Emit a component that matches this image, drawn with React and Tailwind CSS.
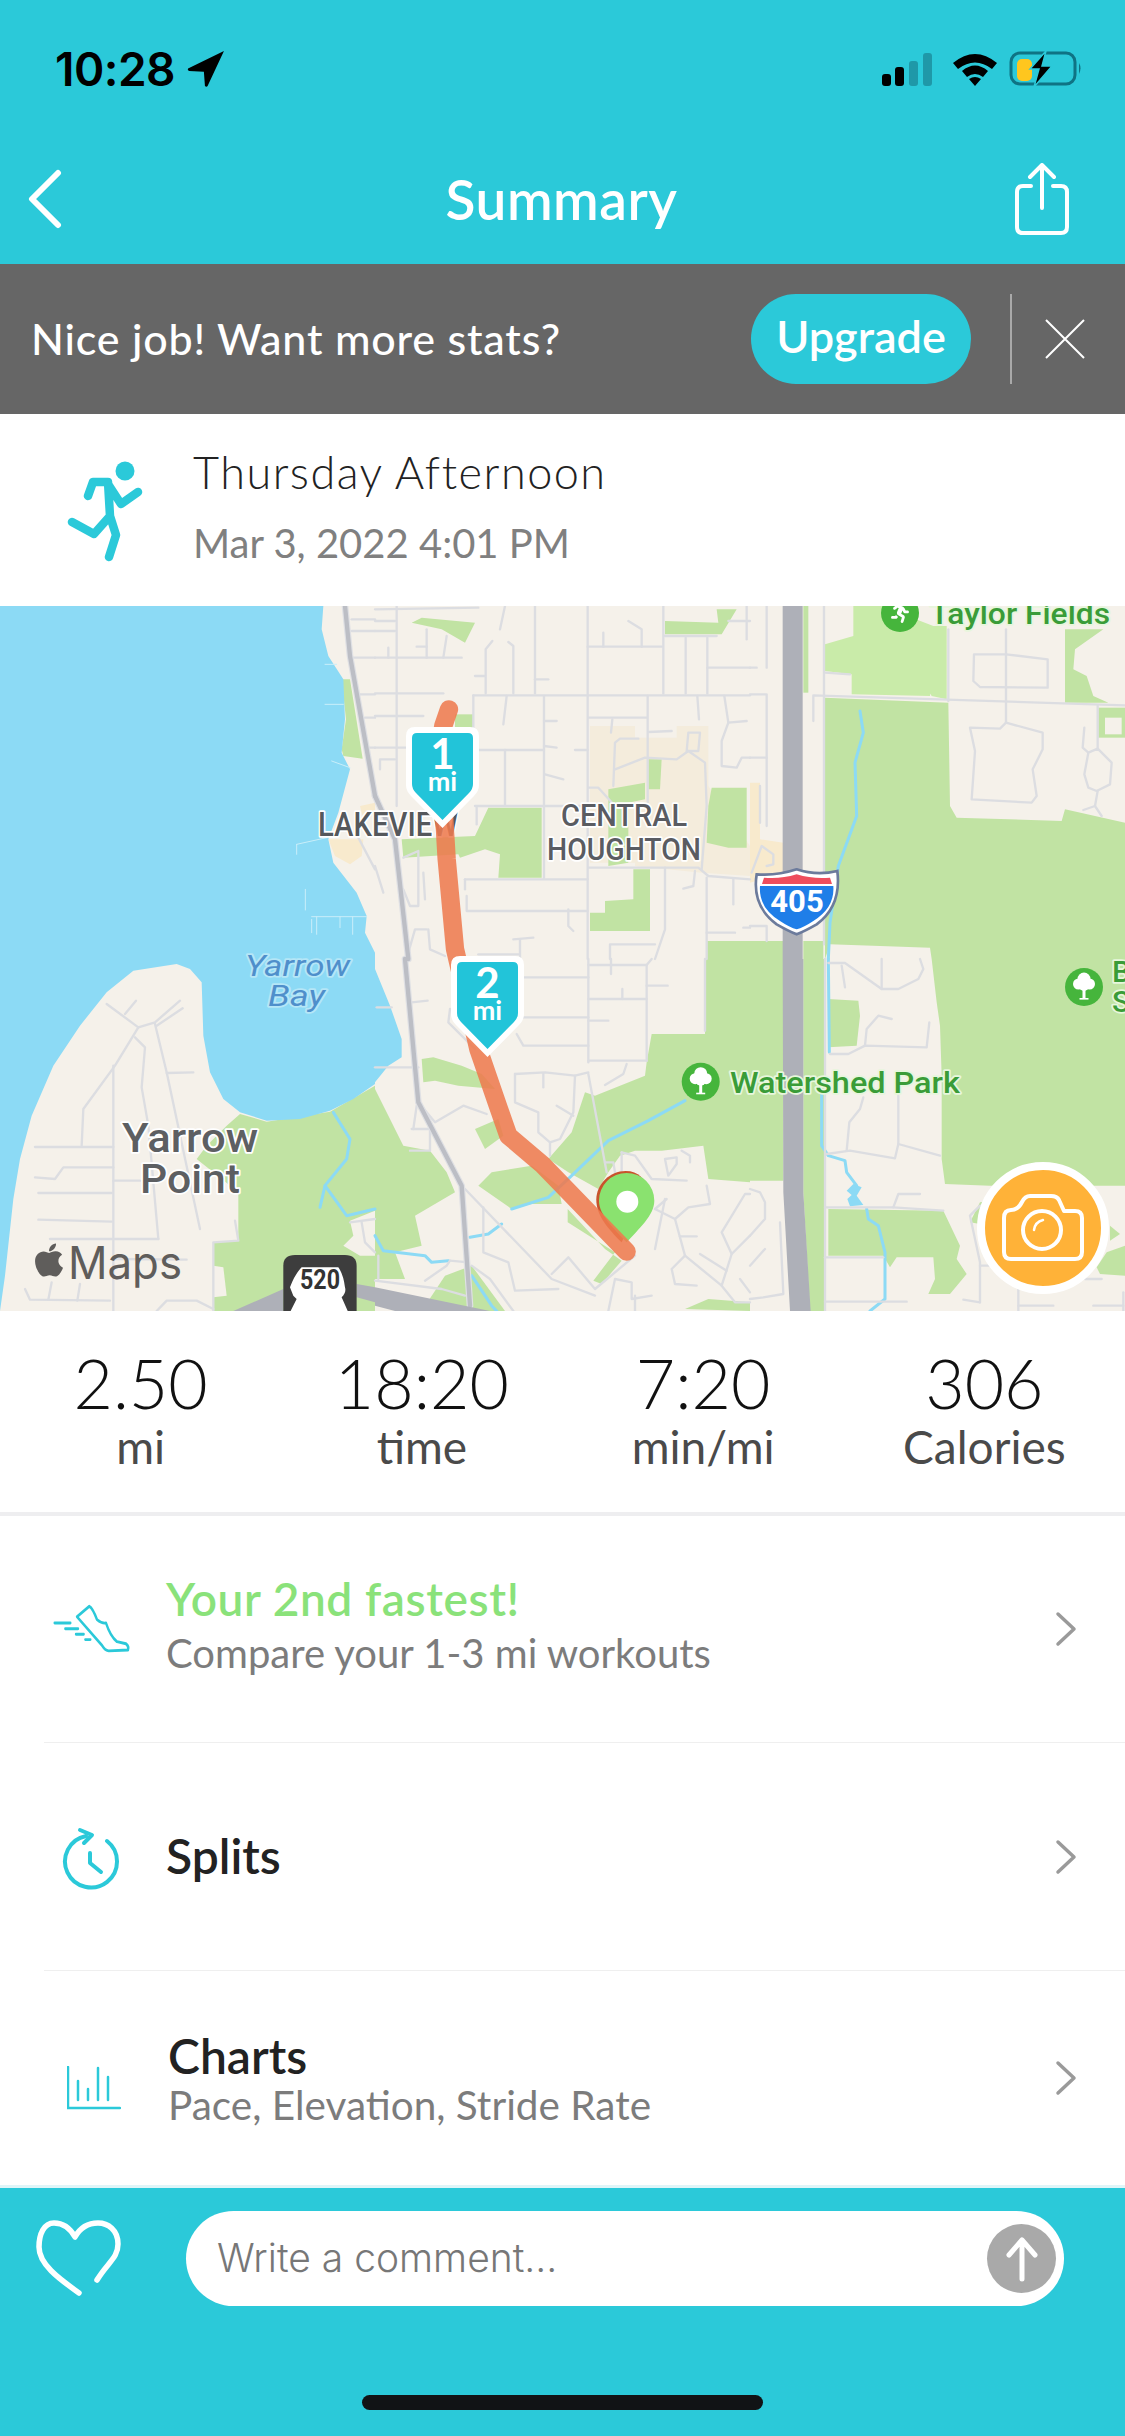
import React from "react";
import { FaApple, FaRunning } from "react-icons/fa";

const crops = [
  { // A
    x: 0, y: 606,
    water: [[[0,0],[970,0],[965,70],[985,150],[1030,220],[1035,340],[1025,440],[1050,490],[1015,620],[985,700],[1000,770],[1070,860],[1100,930],[1095,980],[1125,1040],[1125,1059],[0,1059]]],
    green: [[[1025,220],[1050,220],[1088,458],[1030,450],[1025,430],[1038,340]]],
    tan: [[[985,700],[1090,700],[1085,750],[1050,775],[1005,750]],[[1080,600],[1125,590],[1125,620],[1090,640]]],
    roads: [[[1060,155],[1125,155]],[[1055,40],[1125,40]],[[1055,75],[1125,75]],[[1080,265],[1125,265]],[[1095,335],[1125,335]],[[1105,425],[1125,425]],[[1075,695],[1125,790]]],
    docks: [[[975,295],[1030,295]],[[890,715],[980,695]],[[890,715],[890,745]],[[916,850],[916,912]],[[935,932],[1100,932]],[[950,932],[950,985]],[[935,940],[935,980]],[[1020,932],[1020,965]],[[1058,932],[1058,985]],[[975,175],[1010,175]],[[995,465],[1050,485]]],
    thick: [[[1035,0],[1050,150],[1125,570]]],
  },
  { // B
    x: 0, y: 959,
    water: [[[0,0],[1125,0],[1125,375],[1060,420],[990,455],[900,480],[800,485],[720,460],[670,420],[630,340],[610,230],[605,70],[570,30],[530,15],[400,35],[320,100],[240,200],[160,320],[95,470],[60,600],[40,720],[15,950],[0,1056]]],
    green: [[[720,465],[800,488],[990,458],[1125,380],[1125,1056],[640,1056],[640,850],[715,845],[715,700],[590,600],[620,560],[680,500]]],
    land: [[[1050,785],[1125,755],[1125,890],[1080,890],[1030,860],[1060,830]],[[640,920],[670,925],[680,1010],[640,1015]]],
    river: [[[1000,460],[1050,540],[1040,600],[975,680],[1040,770],[1125,750]],[[975,680],[960,745]]],
    roads: [[[320,135],[415,205],[465,190],[540,125]],[[375,165],[408,125]],[[470,200],[548,148]],[[415,205],[345,320],[250,450],[245,560]],[[405,235],[435,265],[425,385],[445,500],[475,840]],[[465,195],[500,340],[600,810]],[[500,342],[580,340]],[[340,320],[340,1056]],[[105,564],[340,564]],[[105,655],[165,660],[190,625],[340,625]],[[115,702],[335,702]],[[115,782],[335,788]],[[340,665],[420,665]],[[150,840],[475,840]],[[340,900],[560,902]],[[75,990],[90,1022],[330,1025]],[[155,970],[145,1022]],[[240,975],[232,1025]],[[470,1056],[500,1025],[590,1025],[640,1050]],[[705,785],[715,845],[640,850],[640,1056]],[[1050,790],[1125,780]],[[1085,790],[1095,850],[1125,880]]],
    gray: [[[700,1056],[850,990],[850,1056]],[[1070,975],[1125,985],[1125,1030],[1070,1015]]],
  },
  { // C
    x: 375, y: 959,
    water: [[[0,30],[45,140],[80,240],[80,295],[40,320],[0,370]]],
    green: [[[0,390],[85,560],[165,575],[215,640],[240,700],[120,770],[140,860],[60,880],[90,960],[0,960]],[[140,300],[175,295],[260,320],[320,345],[360,390],[250,380],[180,365],[145,370]],[[300,510],[370,480],[385,530],[330,570]],[[310,680],[350,640],[470,620],[550,680],[560,735],[470,735],[410,750]],[[990,0],[1125,0],[1125,670],[1000,660],[985,560],[860,575],[780,575],[735,590],[700,640],[670,690],[580,640],[520,600],[590,520],[630,400],[660,410],[810,350],[815,310],[830,225],[990,225]],[[578,750],[578,790],[720,880],[655,965],[680,975],[740,905],[690,870]],[[290,920],[390,1056],[140,1056],[210,950]],[[930,1050],[1000,1020],[1125,1030],[1125,1056]]],
    river: [[[930,425],[820,485],[700,545],[590,650],[520,715],[410,750]],[[380,795],[340,825],[285,835]],[[0,830],[25,875],[150,890],[170,910],[220,905]],[[290,950],[350,1040],[365,1056]]],
    roads: [[[640,0],[640,310]],[[640,18],[815,18],[830,0]],[[708,0],[708,45]],[[815,18],[815,305]],[[815,80],[878,80]],[[640,120],[815,120]],[[742,90],[742,120]],[[640,185],[700,185]],[[440,55],[640,55]],[[440,175],[640,175]],[[425,225],[445,260],[640,260]],[[640,305],[815,305]],[[755,315],[745,345],[690,378]],[[990,0],[990,215]],[[420,345],[510,340],[600,350],[640,340]],[[505,345],[505,385]],[[420,345],[420,430],[490,460],[490,520],[525,550],[525,590]],[[600,350],[595,460],[555,540],[525,550]],[[545,440],[595,470]],[[640,345],[695,640]],[[225,150],[220,190],[300,270]],[[110,130],[158,125]],[[130,430],[180,490],[265,440],[335,465]],[[115,510],[125,440]],[[110,510],[165,510],[165,575],[105,575]],[[270,690],[530,960],[660,1010]],[[325,745],[325,880],[400,910],[420,995],[550,990]],[[530,945],[580,895],[660,990],[780,890]],[[700,1056],[720,960],[770,970],[770,1020],[830,1010]],[[290,920],[345,960],[415,1056]],[[0,965],[200,990],[270,1010]],[[225,905],[280,910]],[[10,890],[10,960]],[[150,965],[215,920],[225,905]],[[740,580],[740,640]],[[740,580],[780,590],[830,660],[935,665]],[[870,600],[880,650],[905,615],[905,595],[870,600]],[[920,575],[945,590],[945,610]],[[690,610],[715,610],[720,640]],[[840,750],[900,780],[930,890],[1040,980],[1070,885],[1040,820],[1110,705],[1125,705]],[[870,720],[840,870]],[[840,750],[875,720]],[[900,780],[940,745],[1005,735],[995,680]],[[915,832],[965,832]],[[930,890],[890,930],[900,975],[965,980]],[[975,885],[1055,935]],[[1070,885],[1125,830]],[[1040,980],[1080,1030],[1125,1030]],[[1095,960],[1125,1000]],[[780,1010],[780,1056]],[[0,325],[130,325]],[[5,145],[50,145]]],
    thick: [[[90,0],[130,430],[260,680],[285,1040]]],
    gray: [[[0,985],[345,1056],[60,1056],[0,1040]]],
  },
  { // D
    x: 750, y: 606,
    green: [[[225,275],[595,290],[600,600],[620,635],[935,645],[945,610],[1125,650],[1125,1059],[545,1059],[540,1025],[240,1015],[225,1059]],[[0,1005],[100,1005],[100,1059],[0,1059]],[[160,1005],[220,1005],[220,1059],[160,1059]],[[160,0],[175,0],[175,260],[160,260]],[[945,70],[1060,70],[975,130],[970,190],[1010,210],[1030,270],[1075,290],[945,290]],[[1045,305],[1125,305],[1125,395],[1045,395]]],
    lgreen: [[[310,0],[395,0],[550,60],[590,60],[590,280],[545,270],[515,220],[545,220],[540,270],[305,265],[305,205],[225,195],[225,115],[310,90]]],
    land: [[[1065,335],[1115,335],[1115,385],[1065,385]]],
    tan: [[[0,530],[30,530],[30,700],[100,710],[100,800],[0,830]],[[345,710],[375,720],[360,795],[305,800],[330,760]]],
    river: [[[330,315],[340,380],[315,470],[320,630],[265,780],[240,950],[235,1059]]],
    roads: [[[222,0],[222,1015]],[[50,0],[50,185]],[[0,185],[20,185]],[[0,265],[50,265],[50,660]],[[0,455],[50,455]],[[30,540],[30,650]],[[190,345],[190,268],[1125,298]],[[225,200],[300,205]],[[595,70],[595,285]],[[768,70],[768,350]],[[672,145],[768,145],[893,160],[893,245],[690,243],[670,225],[672,145]],[[1043,300],[1043,430]],[[768,350],[750,368],[660,365],[675,435],[665,580],[845,590],[860,570],[848,490],[878,430],[878,380],[768,350]],[[1003,365],[998,425],[1015,440]],[[1043,428],[1085,470],[1080,535],[1040,555],[1015,545],[1003,505],[1015,440],[1043,428]],[[1043,555],[1035,600],[1000,612]],[[1035,600],[1055,630]],[[5,800],[35,720],[70,745],[70,775],[50,780]],[[0,960],[50,960],[50,1005]]],
    gray: [[[98,0],[158,0],[158,1059],[98,1059]]],
  },
  { // E
    x: 750, y: 959,
    green: [[[0,0],[100,0],[100,665],[0,665]],[[160,0],[222,0],[225,1056],[180,1056],[160,700]],[[545,0],[1125,0],[1125,680],[720,680],[585,675],[575,600],[575,350],[570,200],[560,130]],[[235,120],[325,125],[330,170],[320,260],[235,265]],[[235,750],[580,755],[630,860],[620,900],[650,945],[600,1005],[535,1005],[555,960],[550,895],[440,895],[420,925],[400,890],[235,890]],[[1080,800],[1110,825],[1080,845]],[[1040,925],[1070,880],[1125,860],[1125,950],[1050,945]],[[660,790],[690,730],[720,725],[720,800]]],
    river: [[[235,0],[238,280]],[[215,400],[215,560],[235,590],[285,605],[290,640],[320,680]],[[350,750],[355,780],[385,800],[405,880],[405,1020],[360,1056]]],
    blue: [[[290,695],[310,675],[335,685],[320,710],[340,738],[300,742],[292,720],[305,708]]],
    roads: [[[225,0],[225,1056]],[[235,12],[285,12],[395,90],[445,90],[505,60],[520,30],[510,0]],[[275,20],[285,85]],[[395,0],[395,90]],[[240,285],[295,285],[345,260],[530,265],[538,190]],[[345,260],[350,210],[385,170],[425,180]],[[230,585],[300,575],[435,598],[445,555],[570,590]],[[290,575],[298,490],[330,450],[340,415]],[[445,555],[445,410]],[[225,745],[430,745],[445,705],[510,705]],[[430,745],[580,755]],[[225,1028],[470,1028]],[[225,895],[400,895]],[[0,690],[30,700],[45,730],[45,780],[0,830]],[[90,790],[100,1005],[40,1015],[0,1020]],[[0,920],[45,870]],[[690,1030],[640,1022]],[[690,740],[660,770],[690,910],[690,1030]],[[690,920],[720,920]],[[805,990],[805,1056]],[[805,1040],[910,1040]],[[1030,1040],[1120,1040]],[[1005,960],[1055,960]],[[1120,1000],[1120,1056]]],
    gray: [[[98,0],[160,0],[160,700],[182,1056],[120,1056],[100,700]]],
  },
  { // F
    x: 375, y: 606,
    green: [[[110,50],[140,35],[300,50],[270,110],[200,70]],[[870,45],[1030,50],[1025,10],[1085,10],[1040,85],[870,85]],[[240,325],[295,325],[295,370],[240,370]],[[80,700],[300,690],[340,605],[500,605],[500,815],[370,815],[375,745],[330,730],[255,755],[250,745],[85,755]],[[820,460],[860,460],[855,550],[820,550]],[[700,550],[810,530],[810,580],[760,590],[760,770],[700,780]],[[1010,545],[1115,545],[1115,725],[1060,725],[995,710],[1000,600]],[[775,790],[825,790],[825,975],[645,975],[645,920],[690,920],[690,885],[775,880]],[[995,1005],[1125,1005],[1125,1059],[995,1059]]],
    tan0: [[[645,360],[780,360],[780,395],[905,395],[905,360],[1000,360],[1000,540],[1125,720],[1125,810],[980,800],[780,780],[780,770],[645,770]]],
    roads: [[[0,10],[310,5]],[[65,0],[65,600]],[[0,45],[60,45]],[[0,75],[60,75]],[[0,155],[260,155]],[[40,125],[40,155]],[[155,70],[155,155]],[[215,90],[205,155]],[[125,122],[155,122]],[[375,70],[390,0]],[[0,262],[205,262]],[[0,330],[145,330]],[[0,425],[100,425]],[[295,268],[1125,268]],[[332,262],[332,130],[352,105]],[[415,262],[415,120],[400,108]],[[480,0],[480,262]],[[480,220],[520,220]],[[330,210],[300,210]],[[638,0],[638,1059]],[[638,122],[860,122]],[[800,122],[800,70],[760,45]],[[685,80],[685,122]],[[865,0],[865,262]],[[932,95],[932,262]],[[870,90],[1025,90]],[[997,95],[997,262]],[[997,185],[1125,185]],[[1115,0],[1115,100]],[[1060,45],[1125,45]],[[295,268],[295,430]],[[395,270],[385,355]],[[507,270],[507,815]],[[507,345],[545,345]],[[507,420],[545,425]],[[510,505],[565,520]],[[310,432],[507,432]],[[390,432],[390,600]],[[300,600],[640,600]],[[600,432],[638,432]],[[640,335],[815,335]],[[712,340],[708,380]],[[818,270],[818,600]],[[820,378],[890,375]],[[715,540],[720,410],[735,398],[790,398]],[[720,490],[810,455],[905,460],[940,435],[990,470],[995,600],[980,790]],[[935,435],[940,380],[975,380],[970,435],[935,435]],[[967,270],[972,340]],[[1048,270],[1060,350],[1040,405],[1040,480],[1085,485],[1100,455],[1125,455]],[[1060,350],[1115,345]],[[640,545],[670,545],[720,600]],[[640,785],[970,785],[1000,810],[1125,820]],[[870,785],[870,970],[840,1059]],[[960,795],[955,840],[925,848]],[[995,815],[995,1059]],[[1075,820],[1075,895]],[[995,980],[1080,980]],[[1105,965],[1125,965]],[[270,820],[638,820]],[[270,820],[270,850]],[[275,870],[275,915],[638,915]],[[580,910],[580,960],[595,975]],[[705,1059],[705,1015],[840,1015]],[[415,1000],[475,995]],[[435,1000],[435,1059]],[[310,1045],[430,1045]],[[85,850],[105,900],[130,900],[130,735],[85,755]],[[155,970],[120,970],[100,1040]],[[160,970],[165,1030],[210,1050]],[[0,780],[25,860]],[[15,490],[15,460],[60,460]],[[145,800],[150,880]],[[250,600],[240,660]],[[305,605],[305,655]]],
    thick: [[[0,570],[60,700],[100,1059]]],
  },
];

const pts = (l) => l.map((p) => p.join(",")).join(" ");

const Layer = ({ k, fill, stroke, width }) =>
  crops.map((c, i) =>
    c[k] ? (
      <g key={k + i} transform={`translate(${c.x} ${c.y}) scale(${1 / 3})`}>
        {c[k].map((l, j) =>
          stroke ? (
            <polyline key={j} points={pts(l)} fill="none" stroke={stroke} strokeWidth={width} strokeLinejoin="round" strokeLinecap="round" />
          ) : (
            <polygon key={j} points={pts(l)} fill={fill} />
          )
        )}
      </g>
    ) : null
  );

const MapLabel = ({ x, y, w, size, fill, halo = "#ffffff", weight = 500, italic, anchor, children }) => (
  <text
    x={x}
    y={y}
    fontFamily="Roboto, sans-serif"
    fontSize={size}
    fontWeight={weight}
    fontStyle={italic ? "italic" : "normal"}
    fill={fill}
    stroke={halo}
    strokeWidth="3.5"
    strokeLinejoin="round"
    paintOrder="stroke"
    textAnchor={anchor}
    textLength={w}
    lengthAdjust={w ? "spacingAndGlyphs" : undefined}
  >
    {children}
  </text>
);

const Marker = ({ x, y, n }) => (
  <g transform={`translate(${x} ${y})`}>
    <path d="M9 0H64Q73 0 73 9V58Q73 64 68 69L36.5 101L5 69Q0 64 0 58V9Q0 0 9 0Z" fill="#ffffff" />
    <path d="M11 6H62Q67 6 67 11V57Q67 62 63 66L36.5 93L10 66Q6 62 6 57V11Q6 6 11 6Z" fill="#22c4d9" />
    <text x="36.5" y="42" textAnchor="middle" fontFamily="Lato, sans-serif" fontSize="42" fontWeight="700" fill="#ffffff">{n}</text>
    <text x="36.5" y="63.5" textAnchor="middle" fontFamily="Lato, sans-serif" fontSize="27" fontWeight="700" fill="#ffffff">mi</text>
  </g>
);

const Tree = ({ x, y }) => (
  <g transform={`translate(${x} ${y})`}>
    <circle r="19" fill="#46b53c" />
    <g fill="#ffffff">
      <circle cx="-5.5" cy="-3" r="5.5" />
      <circle cx="5.5" cy="-3" r="5.5" />
      <circle cx="0" cy="-8" r="6.5" />
      <circle cx="0" cy="-1" r="5" />
      <rect x="-1.5" y="0" width="3" height="12" />
      <rect x="-4.5" y="11" width="9" height="1.6" />
    </g>
  </g>
);

const MapView = () => (
  <svg viewBox="0 606 1125 705" className="block w-full h-full">
    <rect x="0" y="606" width="1125" height="705" fill="#f5f1ea" />
    <Layer k="tan0" fill="#f4ecdc" />
    <Layer k="tan" fill="#f8eacd" />
    <Layer k="green" fill="#c1e3a3" />
    <Layer k="lgreen" fill="#c9eba9" />
    <Layer k="land" fill="#f5f1ea" />
    <Layer k="water" fill="#8cdaf5" />
    <Layer k="blue" fill="#8cdaf5" />
    <Layer k="docks" stroke="#c9eef9" width={3} />
    <Layer k="river" stroke="#8cdaf5" width={9} />
    <Layer k="roads" stroke="#dcdde1" width={7} />
    <Layer k="thick" stroke="#dfe0e4" width={20} />
    <Layer k="thick" stroke="#bcbec5" width={13} />
    <Layer k="gray" fill="#aeb0b8" />

    <MapLabel x={318} y={836} w={140} size={34} fill="#55585c">LAKEVIEW</MapLabel>
    <MapLabel x={561} y={826} w={126} size={32} fill="#5a5c62">CENTRAL</MapLabel>
    <MapLabel x={547} y={860} w={154} size={32} fill="#5a5c62">HOUGHTON</MapLabel>
    <MapLabel x={245} y={976} w={105} size={29} weight={400} italic fill="#4f8fcb" halo="#b5e6f7">Yarrow</MapLabel>
    <MapLabel x={268} y={1006} w={57} size={29} weight={400} italic fill="#4f8fcb" halo="#b5e6f7">Bay</MapLabel>
    <MapLabel x={122} y={1152} w={136} size={40} fill="#5d5f62">Yarrow</MapLabel>
    <MapLabel x={140} y={1193} w={100} size={40} fill="#5d5f62">Point</MapLabel>
    <MapLabel x={730} y={1093} w={230} size={30} fill="#3a9c38" halo="#e7f6dc">Watershed Park</MapLabel>
    <MapLabel x={930} y={624} w={180} size={30} fill="#3a9c38" halo="#e7f6dc">Taylor Fields</MapLabel>
    <MapLabel x={1112} y={982} size={30} fill="#3a9c38" halo="#e7f6dc">B</MapLabel>
    <MapLabel x={1112} y={1012} size={30} fill="#3a9c38" halo="#e7f6dc">S</MapLabel>

    <Tree x={700.7} y={1081.7} />
    <Tree x={1084} y={987} />
    <circle cx="900" cy="613" r="19" fill="#46b53c" />
    <FaRunning x={889} y={601} size={22} color="#ffffff" />

    {/* interstate shield */}
    <g transform="translate(750 606) scale(0.3333)">
      <path d="M20 805Q80 810 140 790Q200 810 262 795Q275 900 200 955Q165 975 140 985Q115 975 80 955Q5 900 20 805Z" fill="#ffffff" stroke="#6c7b9c" strokeWidth="8" />
      <path d="M30 840H250Q255 905 190 945Q160 965 140 970Q120 965 90 945Q25 905 30 840Z" fill="#1f7ee8" />
      <path d="M42 815Q90 820 140 805Q190 820 240 815L246 834H36Z" fill="#ef4d5d" />
    </g>
    <text x="797" y="912" textAnchor="middle" fontFamily="Roboto, sans-serif" fontSize="31" fontWeight="700" fill="#ffffff">405</text>

    {/* state route shield */}
    <g transform="translate(0 959) scale(0.3333)">
      <path d="M850 1060V920Q850 888 885 888H1035Q1070 888 1070 920V1060Z" fill="#3d3d3d" />
      <path d="M905 925Q885 945 870 985L880 1010L890 1020L870 1060H1045L1025 1015Q1040 1000 1035 985Q1030 945 1015 925Z" fill="#ffffff" />
    </g>
    <text x="320" y="1289" textAnchor="middle" fontFamily="Roboto, sans-serif" fontSize="27" fontWeight="700" fill="#333333" textLength="40" lengthAdjust="spacingAndGlyphs">520</text>

    {/* route + pins */}
    <g transform="translate(375 959) scale(0.3333)">
      <path d="M664 722C664 675 705 636 752 636C790 636 815 660 815 700L740 850C700 810 664 770 664 722Z" fill="#c8532b" />
      <path d="M755 850C720 810 672 770 672 725A83 83 0 0 1 838 725C838 770 790 810 755 850Z" fill="#8ae26f" />
      <circle cx="757" cy="728" r="33" fill="#ffffff" />
      <polyline points="222,-749 205,-700 195,-640 215,-300 240,-30 310,270 365,430 400,530 500,615 755,878" fill="none" stroke="#ee7a4e" strokeOpacity="0.87" strokeWidth="55" strokeLinecap="round" strokeLinejoin="round" />
    </g>
    <Marker x={406} y={727} n="1" />
    <Marker x={451} y={956} n="2" />

    {/* Apple Maps mark */}
    <FaApple x={30} y={1241} size={38} color="#5f5d5b" />
    <text x="68" y="1279" fontFamily="Inter, sans-serif" fontSize="45" fontWeight="400" fill="#5f5d5b" textLength="114" lengthAdjust="spacingAndGlyphs">Maps</text>
  </svg>
);

const Chevron = () => (
  <svg width="24" height="36" viewBox="0 0 24 36" fill="none" stroke="#9a9a9a" strokeWidth="3.5" strokeLinecap="round" strokeLinejoin="round">
    <path d="M4 3L20 18L4 33" />
  </svg>
);

const Stat = ({ value, label }) => (
  <div className="flex-1 flex flex-col items-center">
    <div className="text-[68px] leading-[74px] font-light text-[#111111]">{value}</div>
    <div className="text-[46px] leading-[54px] text-[#4a4a4a]">{label}</div>
  </div>
);

export default function App() {
  return (
    <div className="w-[1125px] h-[2436px] overflow-hidden flex flex-col bg-white font-[Lato,sans-serif]">
      {/* header */}
      <div className="h-[264px] bg-[#2bc9d9] flex flex-col">
        <div className="h-[140px] pt-[44px] pl-[55px] pr-[44px] flex justify-between items-start">
          <div className="flex items-center gap-[12px]">
            <span className="font-[Inter,sans-serif] text-[46px] leading-[50px] font-semibold text-black tracking-[-0.5px]">10:28</span>
            <svg width="38" height="38" viewBox="0 0 36 36" fill="#000000">
              <path d="M35 1L1 17.5Q0 19 2 20L16 20.5L17 34Q18.5 35.5 19.5 34Z" />
            </svg>
          </div>
          <svg width="202" height="38" viewBox="0 0 202 38" className="mt-[6px]">
            <rect x="3" y="24" width="9" height="12" rx="3" fill="#000000" />
            <rect x="16" y="17" width="9" height="19" rx="3" fill="#000000" />
            <rect x="30" y="11" width="9" height="25" rx="3" fill="#1f98a8" />
            <rect x="44" y="3" width="9" height="33" rx="3" fill="#1f98a8" />
            <path d="M74 13Q96 -5 118 13L113 19Q96 6 79 19Z M83 21Q96 10 109 21L104 27Q96 21 88 27Z M90 29Q96 25 102 29L96 36Z" fill="#000000" />
            <rect x="132" y="3" width="64" height="31" rx="9" fill="none" stroke="#0f7384" strokeWidth="3" />
            <path d="M200 13Q203 18 200 24Z" fill="#0f7384" />
            <rect x="138" y="9" width="15" height="22" rx="5" fill="#ffc61e" />
            <path d="M167 1L151 19H160L155 37L173 16H163Z" fill="#000000" stroke="#2bc9d9" strokeWidth="1.5" />
          </svg>
        </div>
        <div className="flex-1 grid grid-cols-[1fr_auto_1fr] items-center pl-[29px] pr-[56px] pb-[6px]">
          <svg width="36" height="60" viewBox="0 0 36 60" fill="none" stroke="#ffffff" strokeWidth="6" strokeLinecap="round" strokeLinejoin="round" className="-ml-[2px]">
            <path d="M31 4L5 30L31 56" />
          </svg>
          <div className="text-[55px] leading-[60px] font-semibold text-white tracking-[0.5px] ml-[25px]">Summary</div>
          <svg width="54" height="72" viewBox="0 0 54 72" fill="none" stroke="#ffffff" strokeWidth="4" strokeLinecap="round" strokeLinejoin="round" className="justify-self-end">
            <path d="M16 23H8Q2 23 2 29V64Q2 70 8 70H46Q52 70 52 64V29Q52 23 46 23H38" />
            <path d="M27 45V3M15 14L27 2L39 14" />
          </svg>
        </div>
      </div>

      {/* upgrade banner */}
      <div className="h-[150px] bg-[#666666] flex items-center pl-[31px] pr-[40px]">
        <div className="flex-1 text-[43px] tracking-[0.8px] font-medium text-white">Nice job! Want more stats?</div>
        <div className="w-[220px] h-[90px] rounded-full bg-[#2bc9d9] flex items-center justify-center text-[45px] font-semibold text-white pb-[4px]">Upgrade</div>
        <div className="w-[2px] h-[90px] bg-[#a9a9a9] ml-[39px] mr-[33px]"></div>
        <svg width="40" height="40" viewBox="0 0 40 40" stroke="#ffffff" strokeWidth="2" fill="none">
          <path d="M1 1L39 39M39 1L1 39" />
        </svg>
      </div>

      {/* activity */}
      <div className="h-[192px] flex items-center pl-[66px]">
        <svg width="80" height="102" viewBox="0 0 80 102" fill="none" stroke="#2bc9d9" strokeWidth="8.5" strokeLinecap="round" strokeLinejoin="round" className="mt-[4px]">
          <circle cx="59" cy="10" r="9.5" fill="#2bc9d9" stroke="none" />
          <path d="M22 35L27 21H42L44 55M42 23L55 43L72 31M44 55L28 73L6 61M44 55L50 74L43 96" />
        </svg>
        <div className="ml-[47px] flex flex-col">
          <div className="text-[45px] leading-[56px] font-light tracking-[1.5px] text-[#222222] -mt-[8px]">Thursday Afternoon</div>
          <div className="text-[40px] leading-[50px] mt-[18px] text-[#808080]">Mar 3, 2022 4:01 PM</div>
        </div>
      </div>

      {/* map */}
      <div className="h-[705px] relative">
        <MapView />
        <div className="absolute left-[977px] top-[556px] w-[132px] h-[132px] rounded-full bg-[#ffb238] border-[8px] border-white flex items-center justify-center">
          <svg width="82" height="68" viewBox="0 0 82 68" fill="none" stroke="#ffffff" strokeWidth="4" strokeLinejoin="round" strokeLinecap="round">
            <path d="M9 16Q2 16 2 24V58Q2 65 9 65H73Q80 65 80 58V24Q80 17 73 17H62L57 6Q55 2 49 2H28Q23 2 20 8Q16 16 9 16Z" />
            <circle cx="40" cy="36" r="19" />
            <path d="M32 36Q33 28 41 26" strokeWidth="2.5" />
          </svg>
        </div>
      </div>

      {/* stats */}
      <div className="h-[201px] flex pt-[35px]">
        <Stat value="2.50" label="mi" />
        <Stat value="18:20" label="time" />
        <Stat value="7:20" label="min/mi" />
        <Stat value="306" label="Calories" />
      </div>
      <div className="h-[4px] bg-[#eeeef0]"></div>

      {/* rows */}
      <div className="h-[226px] flex items-center pl-[52px] pr-[47px]">
        <svg width="80" height="52" viewBox="150 250 240 125" preserveAspectRatio="none" fill="none" stroke="#2bc9d9" strokeWidth="7" strokeLinecap="round" strokeLinejoin="round">
          <path d="M225 283L262 258Q272 262 285 290Q300 300 312 298Q325 330 345 343L372 348Q382 355 378 363L320 365Q310 365 300 352Z" />
          <path d="M158 298H205M190 312H228M222 325H245M250 338H265" />
        </svg>
        <div className="ml-[34px] flex-1 -mt-[6px]">
          <div className="text-[46px] leading-[52px] tracking-[0.6px] font-semibold text-[#8ae27a]">Your 2nd fastest!</div>
          <div className="text-[40px] leading-[52px] mt-[2px] text-[#7c7c7c]">Compare your 1-3 mi workouts</div>
        </div>
        <Chevron />
      </div>
      <div className="h-[1px] ml-[44px] bg-[#efefef]"></div>
      <div className="h-[227px] flex items-center pl-[60px] pr-[47px]">
        <svg width="60" height="66" viewBox="0 0 60 66" fill="none" stroke="#2bc9d9" strokeWidth="4" strokeLinecap="round" strokeLinejoin="round" className="mt-[6px]">
          <path d="M47 14A26 26 0 1 1 26 9" />
          <path d="M20 3L32 8L24 16" />
          <path d="M30 26V36L41 45" />
        </svg>
        <div className="ml-[46px] flex-1 text-[48px] font-semibold text-[#222222] -mt-[2px]">Splits</div>
        <Chevron />
      </div>
      <div className="h-[1px] ml-[44px] bg-[#efefef]"></div>
      <div className="h-[214px] flex items-center pl-[67px] pr-[47px]">
        <svg width="54" height="44" viewBox="0 0 54 44" fill="none" stroke="#2bc9d9" strokeWidth="2.5" strokeLinecap="round" className="mt-[20px]">
          <path d="M1 1V42H53" />
          <path d="M11 15V34M21 23V34M31 2V34M41 11V34" />
        </svg>
        <div className="ml-[47px] flex-1 mt-[3px]">
          <div className="text-[48px] leading-[50px] font-semibold text-[#222222]">Charts</div>
          <div className="text-[40.5px] leading-[48px] text-[#7c7c7c]">Pace, Elevation, Stride Rate</div>
        </div>
        <Chevron />
      </div>

      {/* comment bar */}
      <div className="flex-1 bg-[#2bc9d9] border-t-[3px] border-[#dff5f8] flex flex-col">
        <div className="flex items-center pl-[36px] pr-[61px] pt-[23px]">
          <svg width="86" height="78" viewBox="0 0 86 78" fill="none" stroke="#ffffff" strokeWidth="5.5" strokeLinecap="round" strokeLinejoin="round">
            <path d="M61 60C72 42 82 38 82 24C82 10 72 3 62 3C52 3 44 8 39 17C34 8 28 3 18 3C8 3 3 14 3 27C3 44 22 58 43 73" />
          </svg>
          <div className="ml-[64px] flex-1 h-[95px] rounded-full bg-white flex items-center justify-between pl-[31px] pr-[8px]">
            <span className="text-[39px] font-[Inter,sans-serif] font-light text-[#777777]">Write a comment...</span>
            <div className="w-[69px] h-[69px] rounded-full bg-[#a9a9a9] flex items-center justify-center">
              <svg width="34" height="46" viewBox="0 0 34 46" fill="none" stroke="#ffffff" strokeWidth="5" strokeLinecap="round" strokeLinejoin="round">
                <path d="M17 43V4M4 19L17 4L30 19" />
              </svg>
            </div>
          </div>
        </div>
        <div className="mt-[89px] mx-auto w-[401px] h-[15px] rounded-full bg-[#111315]"></div>
      </div>
    </div>
  );
}
